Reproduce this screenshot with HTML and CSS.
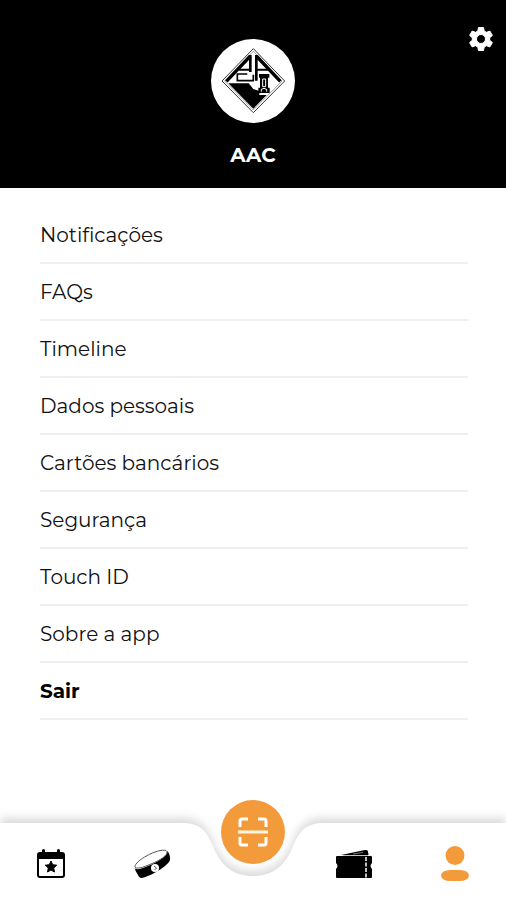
FILE: index.html
```html
<!DOCTYPE html>
<html lang="pt">
<head>
<meta charset="utf-8">
<meta name="viewport" content="width=device-width, initial-scale=1">
<title>AAC</title>
<link rel="stylesheet" href="styles.css">
</head>
<body>
<header class="header">
  <button class="settings" type="button" aria-label="Definições">
    <svg width="26" height="26" viewBox="0 0 26 26"><path fill="#fff" fill-rule="evenodd" stroke="#fff" stroke-width="1" stroke-linejoin="round" d="M10.500 1.500h5l.7 3.500 2.300 1.300 3.400-1.200 2.500 4.300-2.700 2.300v2.600l2.700 2.300-2.500 4.300-3.400-1.200-2.300 1.300-.7 3.500h-5l-.7-3.500-2.300-1.300-3.400 1.200-2.500-4.300 2.700-2.300v-2.600l-2.700-2.300 2.500-4.300 3.400 1.200 2.300-1.300zM13 8.500a4.500 4.500 0 1 0 0 9 4.500 4.500 0 0 0 0-9z"/></svg>
  </button>
  <svg class="crest" viewBox="25 27 252 252" aria-hidden="true">
    <circle cx="151" cy="153" r="126" fill="#fff"/>
    <g transform="translate(48 48)" fill="none" stroke="#000">
      <path d="M104 8 198 105 104 200 10 105z" stroke="#333" stroke-width="3"/>
      <path d="M104 16 190 105 104 192 18 105z" stroke="#777" stroke-width="2"/>
      <path d="M23 106 95 30M185 106 113 30" stroke-width="10"/>
      <path d="M95 27v51M113 27v77" stroke-width="8"/>
      <path d="M61 71h34M113 71h35" stroke-width="6"/>
      <path d="M86 84H56v20h48V86" stroke-width="5"/>
      <path d="M29 112h61l14 17 18 6v12h22l-40 41z" fill="#000" stroke="none"/>
      <path d="M121 84h31v11h-4v30h5v16h-34v-16h5V95h-3z" fill="#000" stroke="none"/>
      <path d="M132 99v23h9V99zM128 137v-7q8-6 16 0v7" stroke="#fff" stroke-width="3"/>
    </g>
  </svg>
  <h1 class="name">AAC</h1>
</header>
<main class="content">
  <ul class="menu">
    <li><a href="#">Notificações</a></li>
    <li><a href="#">FAQs</a></li>
    <li><a href="#">Timeline</a></li>
    <li><a href="#">Dados pessoais</a></li>
    <li><a href="#">Cartões bancários</a></li>
    <li><a href="#">Segurança</a></li>
    <li><a href="#">Touch ID</a></li>
    <li><a href="#">Sobre a app</a></li>
    <li><a class="strong" href="#">Sair</a></li>
  </ul>
</main>
<nav class="tabs">
  <div class="tabs-shape">
    <span class="side"></span>
    <svg width="150" height="77" viewBox="0 0 150 77"><path fill="#fff" d="M0 0H6C26 0 31 14 37 28C45 44 56 53 75 53C94 53 105 44 113 28C119 14 124 0 144 0H150V77H0z"/></svg>
    <span class="side"></span>
  </div>
  <a class="tab" href="#" aria-label="Eventos">
    <svg width="30" height="30" viewBox="0 0 30 30"><path fill-rule="evenodd" d="M6 1.500a1.500 1.500 0 0 1 3 0V3h12V1.500a1.500 1.500 0 0 1 3 0V3h2a3 3 0 0 1 3 3v20a3 3 0 0 1-3 3H4a3 3 0 0 1-3-3V6a3 3 0 0 1 3-3h2zM3 10v16q0 1 1 1h22q1 0 1-1V10z"/><path stroke="#000" d="m15 12 1.700 3.700 4 .5-3 2.800.8 4-3.500-2-3.500 2 .8-4-3-2.800 4-.5z"/></svg>
  </a>
  <a class="tab" href="#" aria-label="Pulseira">
    <svg width="38" height="30" viewBox="0 0 38 30"><path d="M1.500 18C2 22 8 20 15 17 25 13 34 7 34.500 2q3 4 2.500 9C35 17 18 27 9 29q-3 0-4-3-3-4-3.500-8z"/><path fill="#fff" stroke="#555" d="M2 18C1 12 25-1 33 1.500c4 3-4 9-15 13.500C10 18.500 3 20.500 2 18z"/><circle cx="22" cy="19" r="4" fill="#fff"/><path d="m21 17 2.500 2-2 2" fill="none" stroke="#555"/></svg>
  </a>
  <button class="tab scan" type="button" aria-label="Ler código">
    <svg width="32" height="32" viewBox="0 0 32 32" fill="none" stroke="#fff" stroke-width="3"><path d="M3 11V5q0-2 2-2h6M21 3h6q2 0 2 2v6M3 21v6q0 2 2 2h6M21 29h6q2 0 2-2v-6"/><path stroke="#fff4dd" d="M1 16h30"/></svg>
  </button>
  <a class="tab" href="#" aria-label="Bilhetes">
    <svg width="38" height="30" viewBox="0 0 38 30"><path d="M2 7h34q1 0 1 1v6q-3 3 0 6v8q0 1-1 1H2q-1 0-1-1v-8q3-3 0-6V8q0-1 1-1z"/><path d="M6 6 30 1q3-.5 3 1.500L33.500 6z"/><path d="M8 6.500h25M18 5l10-1.500" stroke="#aaa" stroke-width=".7"/><path d="M31 8v21" stroke="#fff" stroke-width="1.500" stroke-dasharray="4 1.500"/></svg>
  </a>
  <a class="tab active" href="#" aria-label="Perfil" aria-current="page">
    <svg width="30" height="36" viewBox="0 0 30 36"><circle cx="15" cy="9.500" r="9.500"/><rect x="1" y="24" width="28" height="11" rx="9" ry="5.500"/></svg>
  </a>
</nav>
</body>
</html>
```
FILE: styles.css
```css
* { box-sizing: border-box; }

body {
  margin: 0;
  min-height: 100vh;
  display: flex;
  flex-direction: column;
  background: #fff;
  color: #111;
  font-family: Montserrat, Inter, sans-serif;
}

button {
  padding: 0;
  border: 0;
  background: none;
  cursor: pointer;
}

svg { display: block; }

.header {
  position: relative;
  display: flex;
  flex-direction: column;
  align-items: center;
  gap: 20px;
  padding: 39px 16px 21px;
  background: #000;
  color: #fff;
}

.settings {
  position: absolute;
  top: 26px;
  right: 12px;
}

.crest {
  width: 84px;
  height: 84px;
}

.name {
  margin: 0;
  font-size: 20px;
  line-height: 24px;
  font-weight: 700;
}

.content {
  flex: 1;
  padding: 19px 38px 40px 40px;
}

.menu {
  margin: 0;
  padding: 0;
  list-style: none;
}

.menu a {
  display: block;
  padding: 17px 0 15px;
  border-bottom: 2px solid #efefef;
  color: inherit;
  font-size: 20px;
  line-height: 23px;
  text-decoration: none;
}

.menu .strong {
  color: #000;
  font-weight: 700;
}

.tabs {
  position: relative;
  display: grid;
  grid-template-columns: repeat(5, 1fr);
  height: 77px;
}

.tabs-shape {
  position: absolute;
  inset: 0;
  display: flex;
  filter: drop-shadow(0 -5px 4px rgba(0, 0, 0, 0.14));
}

.side {
  flex: 1;
  background: #fff;
}

.tab {
  position: relative;
  display: flex;
  align-items: center;
  justify-content: center;
  padding-top: 4px;
  color: #000;
  fill: currentColor;
}

.active { color: #f39b3b; }

.scan {
  justify-self: center;
  width: 64px;
  height: 64px;
  margin-top: -23px;
  padding: 0;
  border-radius: 50%;
  background: #f39b3b;
}
```
